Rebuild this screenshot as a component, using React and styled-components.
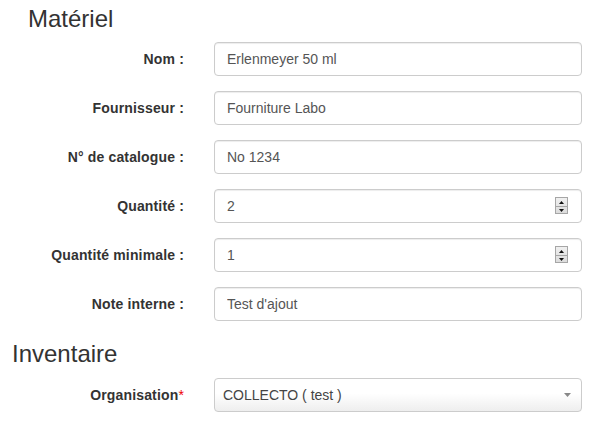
import React from "react";
import styled, { createGlobalStyle } from "styled-components";

const Global = createGlobalStyle`
  html, body { margin: 0; padding: 0; background: #fff; }
  body {
    font-family: "Liberation Sans", Arial, Helvetica, sans-serif;
    font-size: 14px;
    color: #333;
  }
`;

const Page = styled.div`
  display: flex;
  flex-direction: column;
  padding: 0 10px 0 0;
`;

const Heading = styled.h3`
  margin: ${(p) => p.$mt}px 0 10px ${(p) => p.$ml}px;
  font-size: 24px;
  font-weight: 400;
  line-height: 26.4px;
  color: #333;
`;

const Row = styled.div`
  display: grid;
  grid-template-columns: 184px 1fr;
  column-gap: 30px;
  align-items: center;
  margin-bottom: 15px;
`;

const Label = styled.label`
  text-align: right;
  font-weight: 700;
  font-size: 14px;
  letter-spacing: 0.15px;
  color: #333;
  white-space: nowrap;
`;

const Req = styled.span`
  color: #e00;
  font-weight: 400;
`;

const Field = styled.div`
  position: relative;
`;

const Input = styled.input`
  display: block;
  box-sizing: border-box;
  width: 100%;
  height: 34px;
  padding: 6px 12px;
  font-family: inherit;
  font-size: 14px;
  color: #555;
  background: #fff;
  border: 1px solid #ccc;
  border-radius: 4px;
  box-shadow: inset 0 1px 1px rgba(0, 0, 0, 0.075);
  outline: none;
`;

const Spinner = styled.div`
  position: absolute;
  left: 341px;
  top: 8px;
  width: 11px;
  height: 15px;
  border: 1px solid #a6a6a6;
  background: linear-gradient(#f0f0f0, #dcdcdc);
  display: grid;
  grid-template-rows: 1fr 1fr;
  box-sizing: content-box;
`;

const SpinHalf = styled.div`
  display: flex;
  align-items: center;
  justify-content: center;
  border-top: ${(p) => (p.$bottom ? "1px solid #a6a6a6" : "none")};
`;

const Select = styled.div`
  box-sizing: border-box;
  height: 34px;
  display: flex;
  align-items: center;
  justify-content: space-between;
  padding: 0 10px 0 8px;
  border: 1px solid #ccc;
  border-radius: 4px;
  background: linear-gradient(to bottom, #ffffff 45%, #eeeeee 100%);
  color: #444;
  font-size: 14px;
`;

const Arrow = () => (
  <svg width="7" height="4" viewBox="0 0 7 4">
    <path d="M0 0 L7 0 L3.5 4 Z" fill="#888" />
  </svg>
);

const Tri = ({ up }) => (
  <svg width="5" height="3" viewBox="0 0 5 3">
    <path d={up ? "M0 3 L5 3 L2.5 0 Z" : "M0 0 L5 0 L2.5 3 Z"} fill="#111" />
  </svg>
);

const NumberSpin = () => (
  <Spinner>
    <SpinHalf>
      <Tri up />
    </SpinHalf>
    <SpinHalf $bottom>
      <Tri />
    </SpinHalf>
  </Spinner>
);

const fields = [
  { label: "Nom :", value: "Erlenmeyer 50 ml" },
  { label: "Fournisseur :", value: "Fourniture Labo" },
  { label: "N° de catalogue :", value: "No 1234" },
  { label: "Quantité :", value: "2", num: true },
  { label: "Quantité minimale :", value: "1", num: true },
  { label: "Note interne :", value: "Test d'ajout" },
];

export default function App() {
  return (
    <Page>
      <Global />
      <Heading $mt={6} $ml={28}>Matériel</Heading>
      {fields.map((f) => (
        <Row key={f.label}>
          <Label>{f.label}</Label>
          <Field>
            <Input type="text" defaultValue={f.value} readOnly />
            {f.num && <NumberSpin />}
          </Field>
        </Row>
      ))}
      <Heading $mt={5} $ml={12}>Inventaire</Heading>
      <Row>
        <Label>
          Organisation<Req>*</Req>
        </Label>
        <Select>
          <span>COLLECTO ( test )</span>
          <Arrow />
        </Select>
      </Row>
    </Page>
  );
}
